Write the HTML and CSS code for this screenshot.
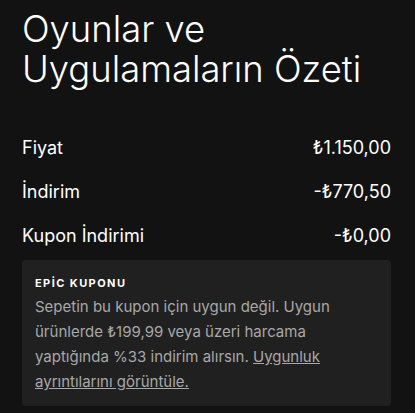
FILE: index.html
```html
<!DOCTYPE html>
<html lang="tr">
<head>
<meta charset="utf-8">
<link rel="stylesheet" href="styles.css">
</head>
<body>
<div class="summary">
  <h1 class="title">Oyunlar ve Uygulamaların Özeti</h1>
  <div class="rows">
    <div class="row"><span>Fiyat</span><span>₺1.150,00</span></div>
    <div class="row"><span>İndirim</span><span>-₺770,50</span></div>
    <div class="row"><span>Kupon İndirimi</span><span>-₺0,00</span></div>
  </div>
  <div class="coupon">
    <div class="coupon-title">EPİC KUPONU</div>
    <p class="coupon-text">Sepetin bu kupon için uygun değil. Uygun ürünlerde ₺199,99 veya üzeri harcama yaptığında %33 indirim alırsın. <a class="coupon-link" href="#">Uygunluk ayrıntılarını görüntüle.</a></p>
  </div>
</div>
</body>
</html>
```
FILE: styles.css
```css
html, body {
  margin: 0;
  padding: 0;
  background: #121212;
}
body {
  font-family: Inter, "Noto Sans", sans-serif;
  color: #fff;
}
.summary {
  padding: 9px 24px 0 22px;
}
.title {
  margin: 0;
  font-size: 36.4px;
  font-weight: 300;
  line-height: 40px;
}
.rows {
  margin-top: 37px;
}
.row {
  display: flex;
  justify-content: space-between;
  font-size: 18px;
  line-height: 24px;
  padding: 10px 0;
}
.coupon {
  margin-top: 2px;
  background: #202020;
  border-radius: 4px;
  padding: 16px 12px 12px 13px;
}
.coupon-title {
  font-size: 11px;
  font-weight: 700;
  line-height: 14px;
  letter-spacing: 0.13em;
}
.coupon-text {
  margin: 4px 0 0;
  font-size: 15px;
  line-height: 25px;
  color: #a8a8a8;
}
.coupon-link {
  color: #a8a8a8;
  text-decoration: underline;
}
```
